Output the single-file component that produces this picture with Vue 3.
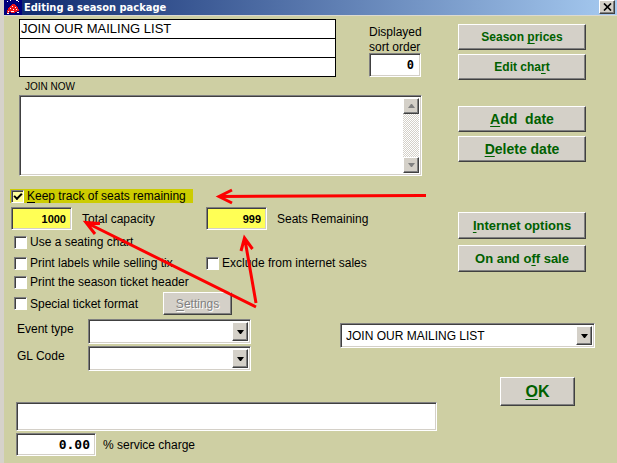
<script setup>
import { ref } from 'vue'

const titles = ref(['JOIN OUR MAILING LIST', '', ''])
const sortOrder = ref('0')
const notes = ref('')
const keepTrack = ref(true)
const capacity = ref('1000')
const remaining = ref('999')
const serviceCharge = ref('0.00')
const comment = ref('')
</script>

<template>
  <main class="window">
    <header class="titlebar">
      <svg class="app-icon" width="18" height="15" viewBox="0 0 18 15" shape-rendering="crispEdges" aria-hidden="true">
        <rect width="18" height="15" fill="#00007c" />
        <path d="M3 1h1v1H3zM6 0h1v1H6zM12 0h2v1h-2zM14 1h1v1h-1z" fill="#fff" />
        <path d="M8 4h3v1h1v1h1v1h1v2h1v2h-2v1h-2v1H7v-1H5v1H3v-3h1V8h1V7h1V6h1V5h1z" fill="#f0141c" />
        <path d="M8 6h1v1H8zM11 7h1v1h-1zM6 8h1v1H6zM9 9h1v1H9zM12 9h1v1h-1zM4 11h1v1H4zM7 11h3v1H7zM3 13h2v1H3zM13 12h2v1h-2z" fill="#fff" />
      </svg>
      <h1>Editing a season package</h1>
      <button class="close raised" type="button" aria-label="Close">
        <svg width="9" height="8" viewBox="0 0 9 8" aria-hidden="true">
          <path d="M1 0.5L8 7.5M8 0.5L1 7.5" stroke="#000" stroke-width="1.7" />
        </svg>
      </button>
    </header>

    <form class="body" @submit.prevent>
      <section class="upper">
        <div class="fields">
          <div class="head">
            <div class="titles">
              <input v-for="(t, i) in titles" :key="i" v-model="titles[i]" type="text" :aria-label="'Title line ' + (i + 1)" />
            </div>
            <div class="sort">
              <label for="sort">Displayed<br />sort order</label>
              <input id="sort" v-model="sortOrder" class="sunken mono" type="text" />
            </div>
          </div>
          <label class="small" for="notes">JOIN NOW</label>
          <div class="memo sunken">
            <textarea id="notes" v-model="notes"></textarea>
            <div class="scroll">
              <button class="raised" type="button" aria-label="Scroll up">
                <svg width="7" height="4" viewBox="0 0 7 4" aria-hidden="true"><path d="M3 0h1l3 4H0z" fill="#808080" /></svg>
              </button>
              <button class="raised" type="button" aria-label="Scroll down">
                <svg width="7" height="4" viewBox="0 0 7 4" aria-hidden="true"><path d="M0 0h7L4 4H3z" fill="#808080" /></svg>
              </button>
            </div>
          </div>

          <div class="track">
            <label class="check marked"><input v-model="keepTrack" type="checkbox" /><span><u>K</u>eep track of seats remaining</span></label>
          </div>
          <div class="pair counts">
            <div class="count"><input id="cap" v-model="capacity" class="sunken yellow" type="text" /><label for="cap">Total capacity</label></div>
            <div class="count"><input id="rem" v-model="remaining" class="sunken yellow" type="text" /><label for="rem">Seats Remaining</label></div>
          </div>
          <div class="options">
            <label class="check"><input type="checkbox" /><span>Use a seating chart</span></label>
            <div class="pair labels">
              <label class="check"><input type="checkbox" /><span>Print labels while selling tix</span></label>
              <label class="check"><input type="checkbox" /><span>Exclude from internet sales</span></label>
            </div>
            <label class="check"><input type="checkbox" /><span>Print the season ticket header</span></label>
            <div class="special">
              <label class="check"><input type="checkbox" /><span>Special ticket format</span></label>
              <button class="raised settings" type="button" disabled><span><u>S</u>ettings</span></button>
            </div>
          </div>
        </div>

        <nav class="actions" aria-label="Package actions">
          <div class="group">
            <button class="raised action" type="button"><span>Season <u>p</u>rices</span></button>
            <button class="raised action" type="button"><span>Edit cha<u>r</u>t</span></button>
          </div>
          <div class="group big">
            <button class="raised action" type="button"><span><u>A</u>dd&nbsp; date</span></button>
            <button class="raised action" type="button"><span><u>D</u>elete date</span></button>
          </div>
          <div class="group tall">
            <button class="raised action" type="button"><span><u>I</u>nternet options</span></button>
            <button class="raised action" type="button"><span>On and o<u>f</u>f sale</span></button>
          </div>
        </nav>
      </section>

      <section class="types">
        <div class="codes">
          <label for="event">Event type</label>
          <div class="combo sunken">
            <select id="event"><option></option></select>
            <span class="drop raised"><svg width="7" height="4" viewBox="0 0 7 4" aria-hidden="true"><path d="M0 0h7L4 4H3z" /></svg></span>
          </div>
          <label for="gl">GL Code</label>
          <div class="combo sunken">
            <select id="gl"><option></option></select>
            <span class="drop raised"><svg width="7" height="4" viewBox="0 0 7 4" aria-hidden="true"><path d="M0 0h7L4 4H3z" /></svg></span>
          </div>
        </div>
        <div class="combo sunken wide">
          <select aria-label="Package"><option>JOIN OUR MAILING LIST</option></select>
          <span class="drop raised"><svg width="7" height="4" viewBox="0 0 7 4" aria-hidden="true"><path d="M0 0h7L4 4H3z" /></svg></span>
        </div>
      </section>

      <section class="bottom">
        <div class="charge">
          <input v-model="comment" class="sunken comment" type="text" aria-label="Comment" />
          <div class="percent">
            <input id="svc" v-model="serviceCharge" class="sunken mono" type="text" />
            <label for="svc">% service charge</label>
          </div>
        </div>
        <button class="raised ok" type="submit"><span><u>O</u>K</span></button>
      </section>
    </form>

    <svg class="arrows" width="430" height="320" viewBox="0 0 430 320" aria-hidden="true">
      <g fill="none" stroke="#fd0000" stroke-width="3">
        <path d="M426 195.500L220 196.500M232 190L219 196.500L232 203" />
        <path d="M256 307L87 223M95 234L86 222.500L100 223.500" />
        <path d="M256 303L245 240M241 251L244.500 238L252.500 249" />
      </g>
    </svg>
  </main>
</template>

<style>
body {
  background: #cecfa3;
}
</style>

<style scoped>
.window {
  position: relative;
  min-height: 100vh;
  box-sizing: border-box;
  border-left: 4px solid #d6d2cb;
  background: #cecfa3;
  color: #000;
  font: 12px/14px "Liberation Sans", Arial, sans-serif;
}
input,
select,
textarea,
button {
  box-sizing: border-box;
  margin: 0;
  color: inherit;
  font: inherit;
}
u {
  text-decoration-thickness: 1px;
  text-underline-offset: 2px;
}
.titlebar {
  display: flex;
  align-items: flex-start;
  height: 16px;
  background: linear-gradient(90deg, #0b266b, #a6caf0);
  border-bottom: 1px solid #dcdad0;
  box-sizing: border-box;
}
.app-icon {
  flex: none;
}
h1 {
  flex: 1;
  margin: 0 0 0 2px;
  color: #fff;
  font: bold 11px/15px "DejaVu Sans Condensed", "DejaVu Sans", sans-serif;
}
.raised {
  display: flex;
  align-items: center;
  justify-content: center;
  padding: 0;
  background: #d4d0c8;
  border: 1px solid;
  border-color: #fff #404040 #404040 #fff;
  box-shadow: inset -1px -1px #808080;
}
.sunken {
  box-sizing: border-box;
  padding: 0;
  background: #fff;
  border: 1px solid;
  border-color: #808080 #fff #fff #808080;
  border-radius: 0;
  box-shadow: inset 1px 1px #404040, inset -1px -1px #d4d0c8;
}
.close {
  width: 16px;
  height: 14px;
  margin-right: 2px;
}
.body {
  padding: 3px 22px 4px 12px;
}
.upper {
  display: flex;
  justify-content: space-between;
}
.fields {
  width: 406px;
}
.head {
  display: flex;
  justify-content: space-between;
  padding-left: 3px;
}
.titles {
  width: 317px;
  height: 58px;
  display: grid;
  grid-template-rows: repeat(3, 1fr);
  gap: 1px;
  padding: 1px;
  box-sizing: border-box;
  background: #000;
}
.titles input {
  width: 100%;
  min-height: 0;
  padding: 0 1px;
  border: 0;
  background: #fff;
  font-size: 13px;
}
.sort {
  width: 53px;
  padding-top: 6px;
  line-height: 15px;
  white-space: nowrap;
}
.sort input {
  display: block;
  width: 52px;
  height: 24px;
  margin-top: -2px;
}
.mono {
  padding: 0 6px;
  text-align: right;
  font: bold 12px/14px "DejaVu Sans Mono", monospace;
}
.small {
  display: block;
  padding: 3px 0 0 9px;
  font-size: 10px;
}
.memo {
  display: flex;
  height: 81px;
  margin: 1px 0 0 3px;
  padding: 2px;
}
.memo textarea {
  flex: 1;
  border: 0;
  background: transparent;
  resize: none;
  outline: 0;
}
.scroll {
  display: flex;
  flex-direction: column;
  justify-content: space-between;
  background: repeating-conic-gradient(#fff 0 25%, #d4d0c8 0 50%) 0 0 / 2px 2px;
}
.scroll button {
  width: 16px;
  height: 16px;
}
.track {
  display: flex;
  margin: 13px 0 0 -6px;
}
.check {
  display: flex;
  align-items: center;
  gap: 3px;
  height: 14px;
  white-space: nowrap;
}
.check input {
  appearance: none;
  width: 13px;
  height: 13px;
  background: #fff;
  border: 1px solid;
  border-color: #808080 #fff #fff #808080;
  box-shadow: inset 1px 1px #404040;
}
.check input:checked {
  background: #ffff9c;
  display: grid;
  place-items: center;
}
.check input:checked::before {
  content: "";
  width: 8px;
  height: 5px;
  border: solid #000;
  border-width: 0 0 2px 2px;
  box-sizing: border-box;
  transform: translateY(-1px) rotate(-45deg);
}
.marked {
  padding: 0 7px 0 1px;
  background: #cccc00;
}
.pair {
  display: grid;
  grid-template-columns: 192px 1fr;
}
.counts {
  margin: 4px 0 0 -5px;
  grid-template-columns: 195px 1fr;
}
.count {
  display: flex;
  align-items: center;
  gap: 10px;
}
.yellow {
  width: 61px;
  height: 23px;
  padding: 0 5px;
  background: #ffff55;
  text-align: right;
  font: bold 11px/14px "Liberation Sans", Arial, sans-serif;
}
.options {
  display: grid;
  margin: 5px 0 0 -2px;
}
.labels {
  margin: 7px 0 5px;
}
.special {
  display: flex;
  align-items: center;
  margin-top: 3px;
}
.settings {
  width: 69px;
  height: 23px;
  margin-left: 25px;
  color: #808080;
  text-shadow: 1px 1px #fff;
}
.actions {
  width: 128px;
  margin-right: 9px;
  padding-top: 1px;
}
.group {
  display: grid;
  gap: 4px;
  padding-top: 4px;
}
.group.big {
  padding-top: 26px;
  font-size: 14px;
}
.group.tall {
  gap: 6px;
  padding-top: 50px;
  font-size: 13px;
}
.action,
.ok {
  height: 26px;
  color: #006000;
  font-weight: bold;
}
.tall .action {
  height: 27px;
}
.types {
  display: flex;
  justify-content: space-between;
  align-items: flex-start;
  padding-top: 4px;
}
.codes {
  display: grid;
  grid-template-columns: 71px 163px;
  row-gap: 2px;
  padding-left: 1px;
}
.codes label {
  padding-top: 3px;
}
.combo {
  display: flex;
  height: 25px;
  padding: 2px;
}
.combo select {
  flex: 1;
  min-width: 0;
  appearance: none;
  padding: 0 3px;
  border: 0;
  background: transparent;
}
.drop {
  width: 14px;
}
.wide {
  width: 255px;
  margin-top: 4px;
}
.bottom {
  display: flex;
  justify-content: space-between;
  align-items: flex-start;
  padding: 6px 20px 0 0;
}
.charge {
  width: 421px;
  padding-top: 25px;
}
.comment {
  display: block;
  width: 100%;
  height: 29px;
}
.percent {
  display: flex;
  align-items: center;
  gap: 7px;
  margin-top: 2px;
}
.percent input {
  width: 80px;
  height: 23px;
  padding: 0 5px;
  font-size: 13px;
}
.ok {
  width: 75px;
  height: 29px;
  font-size: 16px;
}
.arrows {
  position: absolute;
  left: -4px;
  top: 0;
  pointer-events: none;
}
</style>
